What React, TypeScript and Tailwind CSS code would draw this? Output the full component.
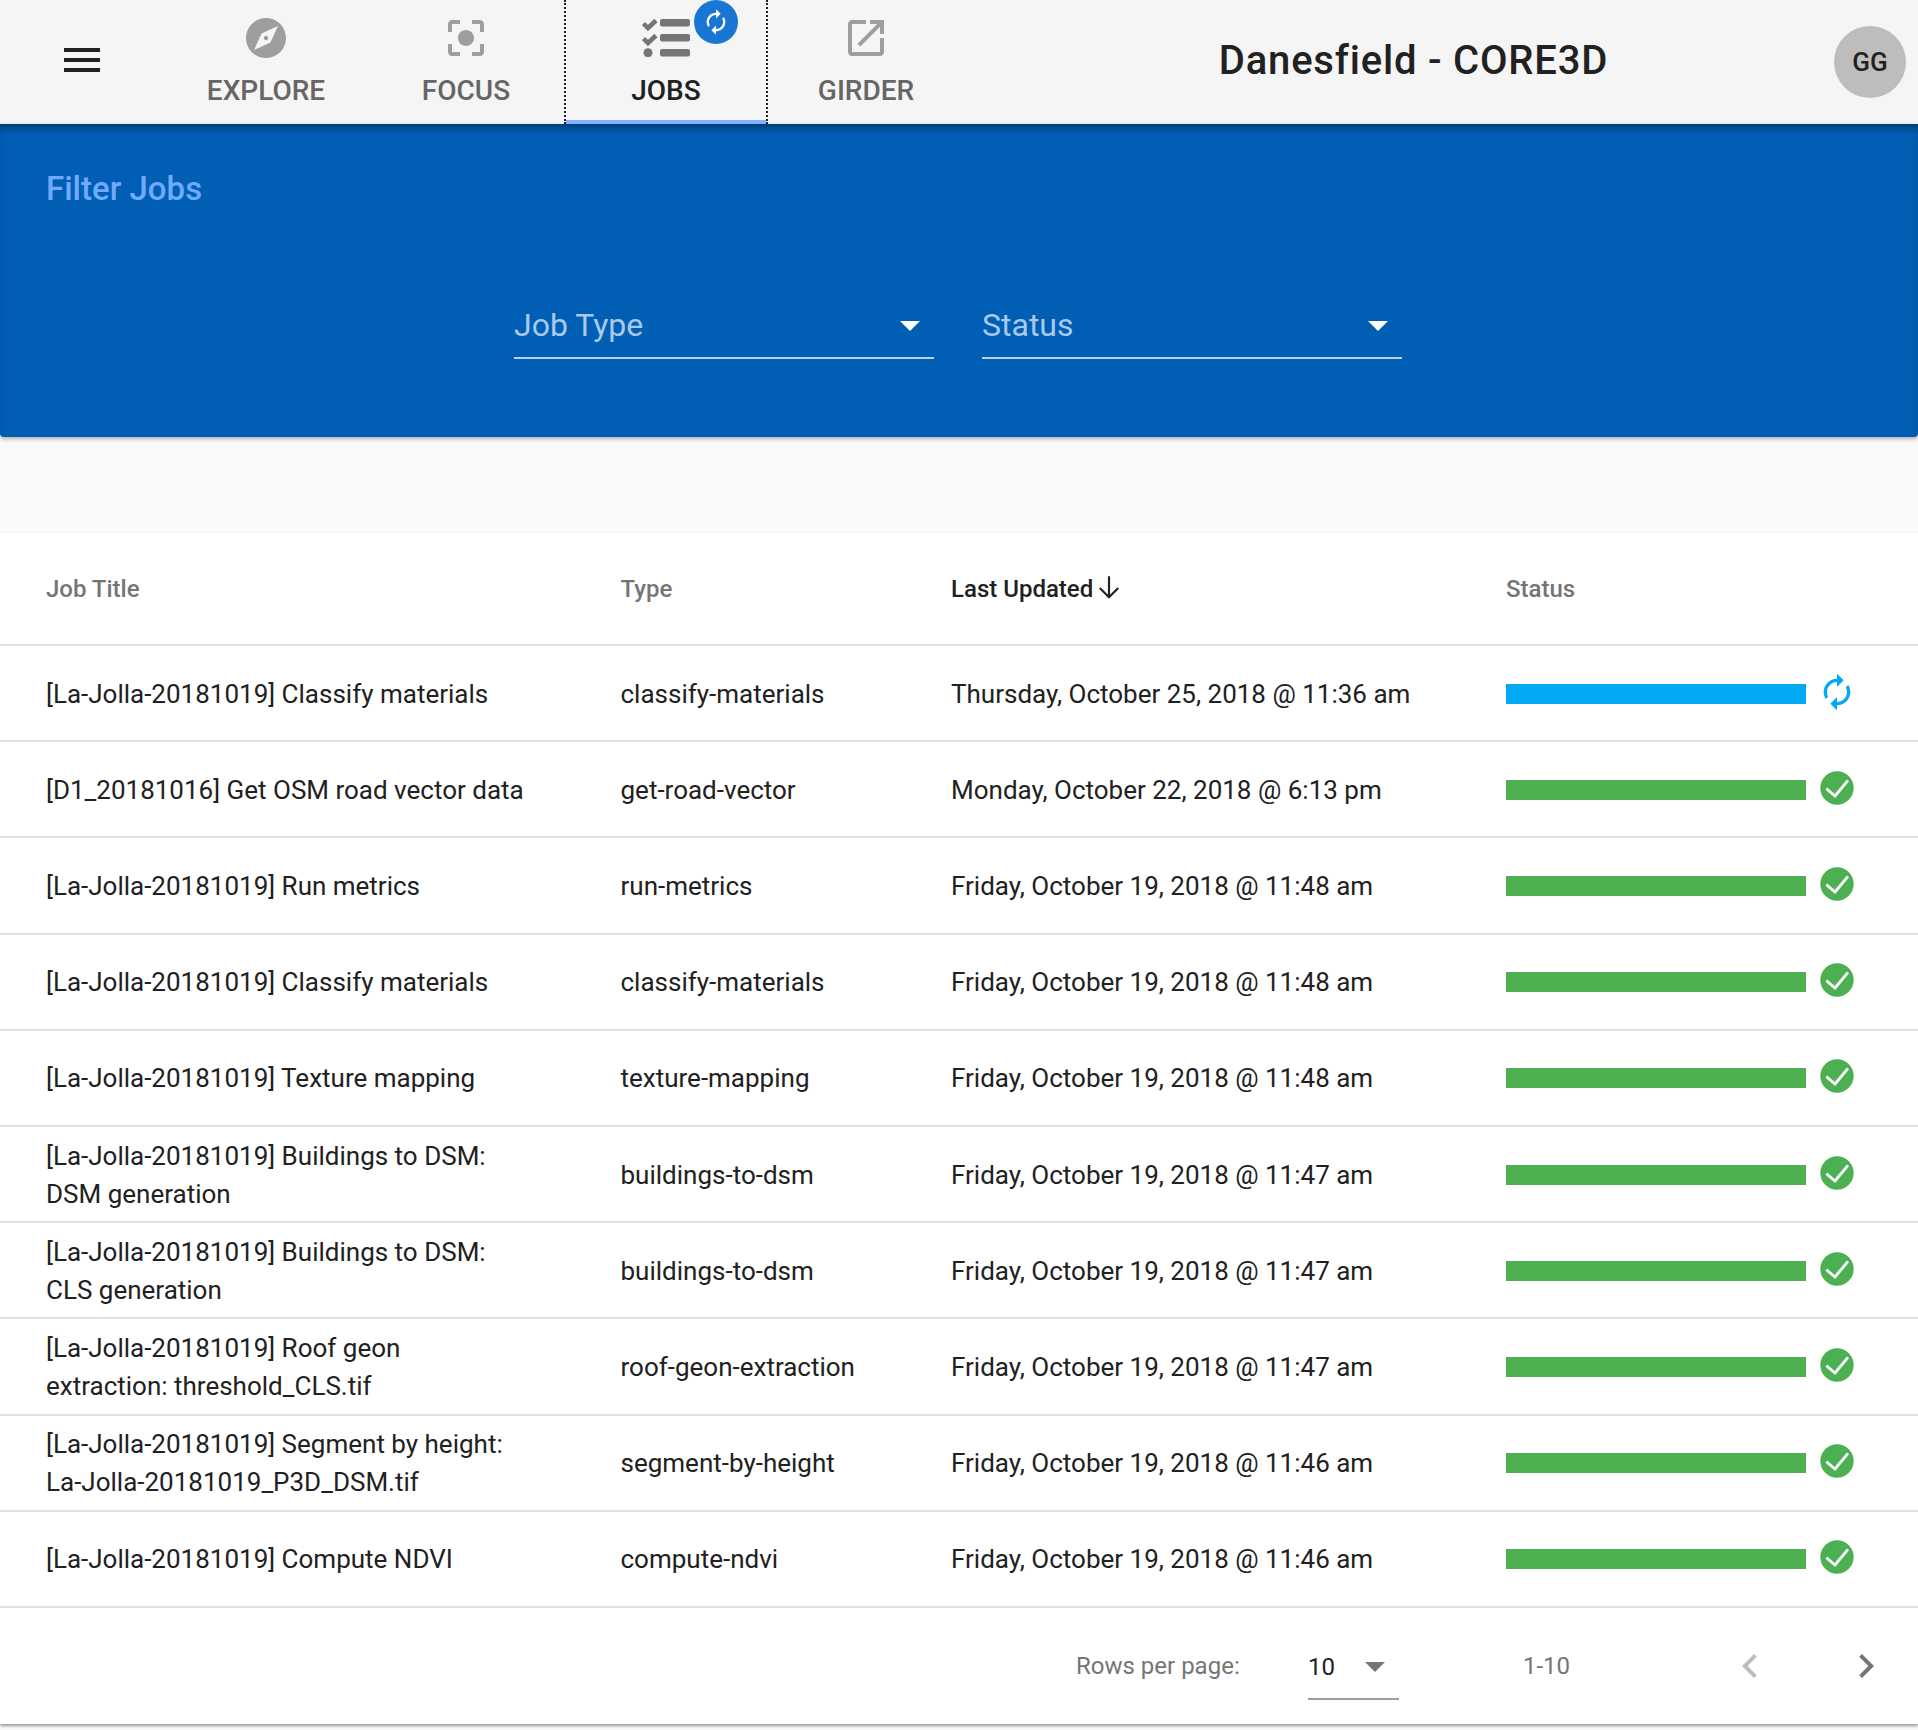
const MENU = 'M3 18h18v-2H3v2zm0-5h18v-2H3v2zm0-7v2h18V6H3z';
const EXPLORE = 'M12 10.9c-.61 0-1.1.49-1.1 1.1s.49 1.1 1.1 1.1c.61 0 1.1-.49 1.1-1.1s-.49-1.1-1.1-1.1zM12 2C6.48 2 2 6.48 2 12s4.48 10 10 10 10-4.48 10-10S17.52 2 12 2zm2.19 12.19L6 18l3.81-8.19L18 6l-3.81 8.19z';
const FOCUS = 'M12 8c-2.21 0-4 1.79-4 4s1.79 4 4 4 4-1.79 4-4-1.79-4-4-4zm-7 7H3v4c0 1.1.9 2 2 2h4v-2H5v-4zM5 5h4V3H5c-1.1 0-2 .9-2 2v4h2V5zm14-2h-4v2h4v4h2V5c0-1.1-.9-2-2-2zm0 16h-4v2h4c1.1 0 2-.9 2-2v-4h-2v4z';
const OPEN = 'M19 19H5V5h7V3H5c-1.11 0-2 .9-2 2v14c0 1.1.89 2 2 2h14c1.1 0 2-.9 2-2v-7h-2v7zM14 3v2h3.59l-9.83 9.83 1.41 1.41L19 6.41V10h2V3h-7z';
const AUTORENEW = 'M12 6v3l4-4-4-4v3c-4.42 0-8 3.58-8 8 0 1.57.46 3.03 1.24 4.26L6.7 14.8c-.45-.83-.7-1.79-.7-2.8 0-3.31 2.69-6 6-6zm6.76 1.74L17.3 9.2c.44.84.7 1.79.7 2.8 0 3.31-2.69 6-6 6v-3l-4 4 4 4v-3c4.42 0 8-3.58 8-8 0-1.57-.46-3.03-1.24-4.26z';

const Icon = ({ d, className }: { d: string; className: string }) => (
  <svg viewBox="0 0 24 24" fill="currentColor" className={className}>
    <path d={d} />
  </svg>
);

const Caret = ({ className }: { className: string }) => (
  <svg viewBox="0 0 20 10" fill="currentColor" className={className}>
    <path d="M0 0h20L10 10z" />
  </svg>
);

const CheckCircle = () => (
  <svg viewBox="0 0 24 24" className="w-[40px] h-[40px] ml-[11px] mb-[4px]">
    <circle cx="12" cy="12" r="10" fill="#4caf50" />
    <path d="M5.600 12.400L10.800 16.800L18.600 7.400" fill="none" stroke="white" strokeWidth="1.700" />
  </svg>
);

const JobsIcon = () => (
  <svg viewBox="0 0 48 40" fill="#757575" className="w-[48px] h-[40px]">
    <path d="M1.500 6.500L6 11L14 3.500M1.500 21.500L6 26L14 18.500" fill="none" stroke="#757575" strokeWidth="4.500" />
    <circle cx="6" cy="35.700" r="4.500" />
    <rect x="18" y="2" width="30" height="7.500" rx="2" />
    <rect x="18" y="17" width="30" height="7.500" rx="2" />
    <rect x="18" y="32" width="30" height="7.500" rx="2" />
  </svg>
);

const rows = [
  { title: '[La-Jolla-20181019] Classify materials', type: 'classify-materials', updated: 'Thursday, October 25, 2018 @ 11:36 am', running: true },
  { title: '[D1_20181016] Get OSM road vector data', type: 'get-road-vector', updated: 'Monday, October 22, 2018 @ 6:13 pm' },
  { title: '[La-Jolla-20181019] Run metrics', type: 'run-metrics', updated: 'Friday, October 19, 2018 @ 11:48 am' },
  { title: '[La-Jolla-20181019] Classify materials', type: 'classify-materials', updated: 'Friday, October 19, 2018 @ 11:48 am' },
  { title: '[La-Jolla-20181019] Texture mapping', type: 'texture-mapping', updated: 'Friday, October 19, 2018 @ 11:48 am' },
  { title: '[La-Jolla-20181019] Buildings to DSM: DSM generation', type: 'buildings-to-dsm', updated: 'Friday, October 19, 2018 @ 11:47 am' },
  { title: '[La-Jolla-20181019] Buildings to DSM: CLS generation', type: 'buildings-to-dsm', updated: 'Friday, October 19, 2018 @ 11:47 am' },
  { title: '[La-Jolla-20181019] Roof geon extraction: threshold_CLS.tif', type: 'roof-geon-extraction', updated: 'Friday, October 19, 2018 @ 11:47 am' },
  { title: '[La-Jolla-20181019] Segment by height: La-Jolla-20181019_P3D_DSM.tif', type: 'segment-by-height', updated: 'Friday, October 19, 2018 @ 11:46 am' },
  { title: '[La-Jolla-20181019] Compute NDVI', type: 'compute-ndvi', updated: 'Friday, October 19, 2018 @ 11:46 am' },
];

const Tab = ({ label, d }: { label: string; d: string }) => (
  <div className="w-[200px] h-[124px] flex flex-col items-center text-[#666666]">
    <Icon d={d} className="w-[48px] h-[48px] mt-[14px] text-[#9e9e9e]" />
    <div className="mt-[12px] text-[28px] leading-[34px] font-medium">{label}</div>
  </div>
);

export default function App() {
  return (
    <div className="min-h-[1730px] bg-[#fafafa] font-['Roboto',sans-serif] text-[#212121]">
      {/* Toolbar */}
      <div className="h-[124px] bg-[#f5f5f5] flex items-start">
        <div className="w-[166px] h-[124px] flex items-center pl-[58px] pb-[4px]">
          <Icon d={MENU} className="w-[48px] h-[48px] text-[#212121]" />
        </div>
        <Tab label="EXPLORE" d={EXPLORE} />
        <Tab label="FOCUS" d={FOCUS} />
        <div className="relative w-[204px] -mx-[2px] h-[124px] border-x-2 border-dotted border-[#212121] flex flex-col items-center">
          <div className="mt-[13px] h-[48px] flex items-start pt-[4px]">
            <JobsIcon />
          </div>
          <div className="mt-[13px] text-[28px] leading-[34px] font-medium text-[#212121]">JOBS</div>
          <div className="absolute left-0 right-0 bottom-0 h-[4px] bg-[#82b1ff]" />
          <div className="absolute left-[128px] top-0 w-[44px] h-[44px] rounded-full bg-[#1976d2] flex items-center justify-center">
            <Icon d={AUTORENEW} className="w-[28px] h-[28px] text-white" />
          </div>
        </div>
        <Tab label="GIRDER" d={OPEN} />
        <div className="flex-1 h-[124px] flex items-center justify-between">
          <div className="flex-1 flex justify-center pl-[27px] pb-[2px] text-[40px] font-medium tracking-[0.8px]">Danesfield - CORE3D</div>
          <div className="w-[72px] h-[72px] mr-[12px] rounded-full bg-[#bdbdbd] flex items-center justify-center text-[26px] font-medium">GG</div>
        </div>
      </div>

      {/* Filters */}
      <div className="h-[313px] bg-[#005eb5] rounded-b-[4px] shadow-[inset_0_8px_8px_-4px_rgba(0,0,0,0.4),0_2px_4px_rgba(0,0,0,0.3)] pt-[46px] px-[46px]">
        <div className="text-[33px] leading-[38px] font-medium text-[#70aaff]">Filter Jobs</div>
        <div className="flex justify-center gap-[48px] mt-[87px] pr-[2px]">
          {['Job Type', 'Status'].map(label => (
            <div key={label} className="w-[420px] h-[64px] border-b-2 border-[#b8d2ee] flex items-center justify-between text-[#a9c9ea]">
              <span className="text-[32px] mb-[2px]">{label}</span>
              <Caret className="w-[20px] h-[10px] mr-[14px] text-white" />
            </div>
          ))}
        </div>
      </div>

      <div className="h-[96px]" />

      {/* Table */}
      <div className="bg-white shadow-[0_2px_3px_rgba(0,0,0,0.4)]">
        <div className="h-[113px] pt-[1px] grid grid-cols-[620.500px_330.500px_555px_1fr] items-center border-b-2 border-[#e0e0e0] text-[24px] font-medium text-[#757575]">
          <div className="pl-[46px]">Job Title</div>
          <div>Type</div>
          <div className="flex items-center text-[#212121]">
            Last Updated
            <svg viewBox="0 0 24 24" className="w-[26px] h-[26px] mb-[5px] ml-[3px]" fill="none" stroke="currentColor" strokeWidth="2">
              <path d="M12 2v19M3.500 13l8.500 8.500L20.500 13" />
            </svg>
          </div>
          <div>Status</div>
        </div>
        {rows.map((row, i) => (
          <div key={i} className="h-[96.2px] pt-[1px] grid grid-cols-[620.500px_330.500px_555px_1fr] items-center border-b-2 border-[#e0e0e0] text-[26px] leading-[38px]">
            <div className="pl-[46px] pr-[95px]">{row.title}</div>
            <div>{row.type}</div>
            <div>{row.updated}</div>
            <div className="flex items-center">
              <div className={`w-[300px] h-[20px] ${row.running ? 'bg-[#03a9f4]' : 'bg-[#4caf50]'}`} />
              {row.running ? (
                <Icon d={AUTORENEW} className="w-[40px] h-[40px] ml-[11px] mb-[4px] text-[#03a9f4]" />
              ) : (
                <CheckCircle />
              )}
            </div>
          </div>
        ))}

        {/* Pagination */}
        <div className="h-[116px] flex items-center text-[24px] text-[#757575] relative">
          <div className="ml-[1076px] w-[232px]">Rows per page:</div>
          <div className="w-[91px] h-[64px] border-b-2 border-[#9e9e9e] flex items-center justify-between mt-[4px] text-[#212121]">
            <span>10</span>
            <Caret className="w-[20px] h-[10px] mr-[14px] text-[#757575]" />
          </div>
          <div className="ml-[124px] w-[200px]">1-10</div>
          <svg viewBox="0 0 24 24" className="absolute left-[1725.500px] top-[34px] w-[48px] h-[48px] text-[#bdbdbd]" fill="currentColor"><path d="M15.410 7.410L14 6l-6 6 6 6 1.410-1.410L10.830 12z" /></svg>
          <svg viewBox="0 0 24 24" className="absolute left-[1841.500px] top-[34px] w-[48px] h-[48px] text-[#757575]" fill="currentColor"><path d="M10 6L8.590 7.410 13.170 12l-4.580 4.590L10 18l6-6z" /></svg>
        </div>
      </div>
    </div>
  );
}
